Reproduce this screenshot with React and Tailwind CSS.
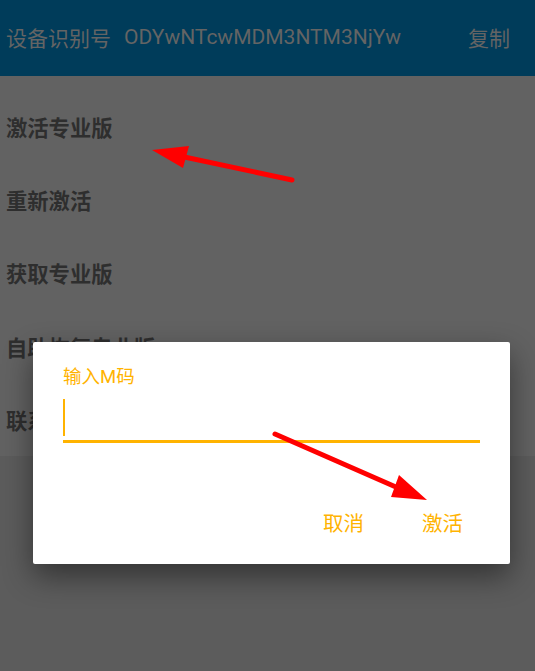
import React from "react";

const items = ["激活专业版", "重新激活", "获取专业版", "自助恢复专业版", "联系我们"];

const cjk = { fontFamily: '"Noto Sans CJK SC", "Noto Sans", sans-serif' };
const mixed = { fontFamily: 'Roboto, "Noto Sans CJK SC", sans-serif' };

const Arrows = () => (
  <svg className="absolute inset-0 pointer-events-none" width="535" height="671" viewBox="0 0 535 671">
    <line x1="292" y1="180" x2="175" y2="155" stroke="#ff0000" strokeWidth="5" strokeLinecap="round" />
    <polygon points="152,150 189,146 183,168" fill="#ff0000" />
    <line x1="275" y1="434" x2="405" y2="491" stroke="#ff0000" strokeWidth="5" strokeLinecap="round" />
    <polygon points="427,500 399,475 391,497" fill="#ff0000" />
  </svg>
);

const App = () => {
  return (
    <div className="relative w-[535px] h-[671px] overflow-hidden bg-[#5c5c5c]" style={cjk}>
      <header className="flex items-center h-[76px] bg-[#003c5a] pl-[6px] pr-[25px] text-[21px] text-[#646464]">
        <span>设备识别号</span>
        <span className="ml-[13px]" style={mixed}>ODYwNTcwMDM3NTM3NjYw</span>
        <span className="ml-auto">复制</span>
      </header>

      <ul className="bg-[#626262] pt-[14px]">
        {items.map((t) => (
          <li key={t} className="flex items-center h-[73.3px] pl-[6px] text-[21.3px] font-semibold text-[#2e2e2e]">
            {t}
          </li>
        ))}
      </ul>

      <div className="absolute left-[33px] top-[342px] w-[477px] h-[222px] bg-white rounded-[2px] shadow-[0_12px_30px_rgba(0,0,0,0.45)]">
        <div className="pt-[23px] pl-[30px] pr-[30px]">
          <div className="h-[24px] leading-[24px] text-[18.5px] text-[#ffb300]" style={mixed}>
            输入M码
          </div>
          <div className="mt-[10px] h-[37px]">
            <div className="w-[2px] h-full bg-[#ffb300]" />
          </div>
          <div className="mt-[4px] h-[3px] bg-[#ffb300]" />
        </div>
        <div className="flex justify-end gap-[58px] pr-[47px] mt-[65px] text-[20.5px] leading-[28px] text-[#ffb300]">
          <span>取消</span>
          <span>激活</span>
        </div>
      </div>

      <Arrows />
    </div>
  );
};

export default App;
